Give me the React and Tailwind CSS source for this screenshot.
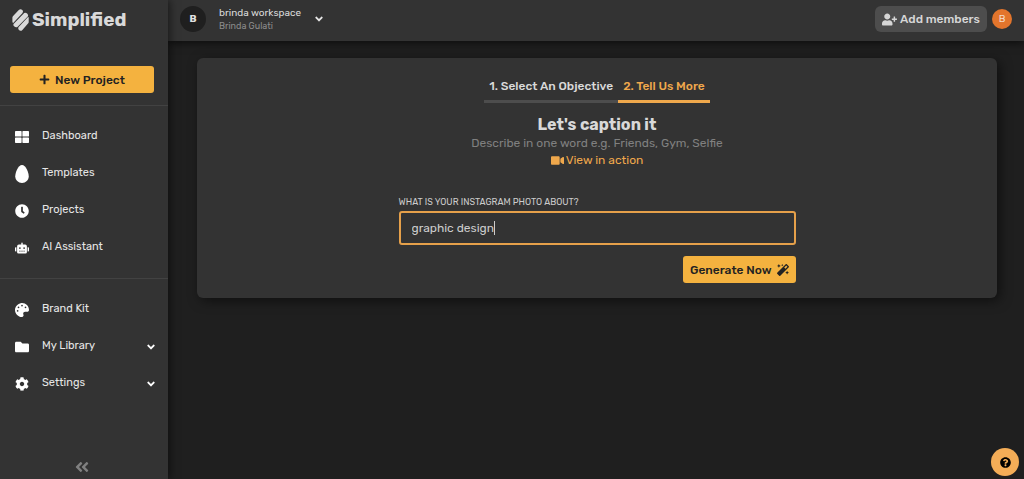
import React, { useState } from "react"
import {
    FaPlus, FaEgg, FaClock, FaRobot, FaPalette, FaFolder, FaCog,
    FaAngleDown, FaAngleDoubleLeft, FaUserPlus, FaVideo, FaMagic, FaQuestionCircle
} from "react-icons/fa"

const DashboardIcon = () => (
    <svg width="14" height="12" viewBox="0 0 14 12" fill="currentColor" aria-hidden="true">
        <rect x="0" y="0" width="6.6" height="5.6" rx="0.7" />
        <rect x="7.4" y="0" width="6.6" height="5.6" rx="0.7" />
        <rect x="0" y="6.4" width="6.6" height="5.6" rx="0.7" />
        <rect x="7.4" y="6.4" width="6.6" height="5.6" rx="0.7" />
    </svg>
)

const mainLinks = [
    { label: "Dashboard", icon: <DashboardIcon /> },
    { label: "Templates", icon: <FaEgg size={18} /> },
    { label: "Projects", icon: <FaClock size={14} /> },
    { label: "AI Assistant", icon: <FaRobot size={14} /> },
]

const workspaceLinks = [
    { label: "Brand Kit", icon: <FaPalette size={14} /> },
    { label: "My Library", icon: <FaFolder size={14} />, expandable: true },
    { label: "Settings", icon: <FaCog size={14} />, expandable: true },
]

const Logo = () => (
    <a href="#" className="flex h-10 items-center gap-[3px] pl-3 text-[#d9d9d9]">
        <svg width="17" height="22" viewBox="0 0 17 22" fill="currentColor" aria-hidden="true">
            <path d="M0.4 8.6 Q0.5 7.6 1.1 7 L6.8 1 Q8.6 -0.6 10.3 1 Q11.7 2.6 10.3 4.2 L1.2 13.9 Q0.4 13.8 0.4 12.6 Z" />
            <path d="M1.5 15 L12.2 4 Q13.7 3.2 15.4 4.8 Q16.7 6.2 15.8 7.6 L5.4 18 Q3.7 18.8 2.1 17.3 Q0.9 16.2 1.5 15 Z" />
            <path d="M16.7 8.6 L16.7 13 Q16.6 14 16 14.6 L10.4 20.9 Q8.7 22.6 6.9 21 Q5.5 19.3 6.9 17.7 L15.8 8.3 Q16.6 7.8 16.7 8.6 Z" />
        </svg>
        <span className="text-[19px] leading-6 font-bold">Simplified</span>
    </a>
)

const NavItem = ({ label, icon, expandable }) => (
    <li>
        <a href="#" className="flex h-[37px] items-center pr-[11px] pl-[14px] text-[11px] text-[#e6e6e6]">
            <span className="flex w-4 justify-center text-white">{icon}</span>
            <span className="ml-3 flex-1">{label}</span>
            {expandable && <FaAngleDown size={12} className="text-white" />}
        </a>
    </li>
)

const Sidebar = () => (
    <aside className="z-20 flex w-[168px] shrink-0 flex-col bg-[#333333] shadow-[2px_0_8px_rgba(0,0,0,0.5)]">
        <Logo />
        <div className="border-b border-[#424242] pt-[26px] pr-[14px] pb-3 pl-[10px]">
            <button className="flex h-[27px] w-full items-center justify-center gap-[5px] rounded-[3px] bg-[#f4b23f] text-[12px] font-medium text-[#222222]">
                <FaPlus size={11} />
                New Project
            </button>
        </div>
        <nav className="flex flex-1 flex-col">
            <ul className="border-b border-[#424242] py-3">
                {mainLinks.map((link) => <NavItem key={link.label} {...link} />)}
            </ul>
            <ul className="pt-3">
                {workspaceLinks.map((link) => <NavItem key={link.label} {...link} />)}
            </ul>
        </nav>
        <button aria-label="Collapse sidebar" className="mr-1 self-center p-1 text-[#808080]">
            <FaAngleDoubleLeft size={16} />
        </button>
    </aside>
)

const Header = () => (
    <header className="z-10 flex h-[41px] items-center justify-between bg-[#333333] px-3 pb-[3px] shadow-[0_2px_8px_rgba(0,0,0,0.6)]">
        <button className="flex items-center text-left">
            <span className="flex size-[26px] items-center justify-center rounded-full bg-[#1f1f1f] text-[10px] font-bold text-[#e0e0e0]">B</span>
            <span className="ml-[13px] flex flex-col">
                <span className="text-[10px] leading-[14px] text-[#d9d9d9]">brinda workspace</span>
                <span className="text-[9px] leading-[13px] text-[#8c8c8c]">Brinda Gulati</span>
            </span>
            <FaAngleDown size={12} className="ml-3 text-[#e6e6e6]" />
        </button>
        <div className="flex items-center gap-[5px]">
            <button className="flex h-[26px] items-center gap-[3px] rounded-md bg-[#4d4d4d] px-[7px] text-[12px] font-medium text-[#d6d6d6]">
                <FaUserPlus size={15} />
                Add members
            </button>
            <button className="flex size-5 items-center justify-center rounded-full bg-[#e3752c] text-[10px] text-[#f5dccb]">B</button>
        </div>
    </header>
)

const CaptionForm = () => {
    const [topic, setTopic] = useState("graphic design")

    return (
        <form className="mx-auto mt-[26px] flex w-full max-w-[397px] flex-col" onSubmit={(e) => e.preventDefault()}>
            <label htmlFor="topic" className="text-[9px] leading-[14px] text-[#cccccc] uppercase">
                What is your instagram photo about?
            </label>
            <div className="mt-[2px] flex h-[34px] items-center rounded-[3px] border-2 border-[#e5a04a] px-[11px]">
                <input
                    id="topic"
                    autoFocus
                    value={topic}
                    onChange={(e) => setTopic(e.target.value)}
                    className="field-sizing-content max-w-full bg-transparent text-[12px] text-[#cccccc] caret-transparent outline-none"
                />
                <span className="h-[14px] w-px shrink-0 bg-[#cccccc]" />
            </div>
            <button type="submit" className="mt-[11px] flex h-[27px] items-center gap-[5px] self-end rounded-[3px] bg-[#f4b23f] px-[7px] text-[12px] font-medium text-[#222222]">
                Generate Now
                <FaMagic size={12} />
            </button>
        </form>
    )
}

const App = () => {
    return (
        <div className="flex min-h-screen bg-[#1f1f1f] font-['Rubik','Roboto',sans-serif]">
            <Sidebar />
            <div className="flex min-w-0 flex-1 flex-col">
                <Header />
                <main className="flex-1 pt-[17px] pr-[27px] pl-[29px]">
                    <section className="rounded-md bg-[#333333] px-4 pt-4 pb-[15px] shadow-[3px_3px_12px_rgba(0,0,0,0.5)]">
                        <div className="flex justify-center text-[12px] leading-6 font-medium">
                            <button className="border-b-3 border-[#4d4d4d] px-[5px] pb-[2px] text-[#d9d9d9]">1. Select An Objective</button>
                            <button className="border-b-3 border-[#efa84c] px-[5px] pb-[2px] text-[#efa84c]">2. Tell Us More</button>
                        </div>
                        <div className="mt-3 flex flex-col items-center text-[12px] leading-[17px]">
                            <h1 className="text-[16px] leading-5 font-bold text-[#d9d9d9]">Let's caption it</h1>
                            <p className="text-[#808080]">Describe in one word e.g. Friends, Gym, Selfie</p>
                            <a href="#" className="flex items-center gap-[2px] text-[#efa84c]">
                                <FaVideo size={13} />
                                View in action
                            </a>
                        </div>
                        <CaptionForm />
                    </section>
                </main>
            </div>
            <button aria-label="Help" className="fixed right-[5px] bottom-[3px] z-30 flex size-7 items-center justify-center rounded-full bg-[#f4ad57] text-black">
                <FaQuestionCircle size={11} />
            </button>
        </div>
    )
}

export default App
